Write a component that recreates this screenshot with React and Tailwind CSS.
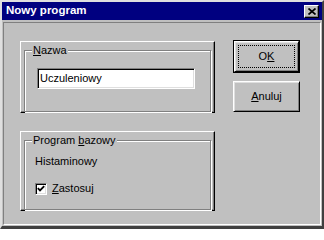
import React from "react";

const font = { fontFamily: '"Liberation Sans", Arial, sans-serif' };

function GroupFrame({ label, height, children }) {
    return (
        <div
            className={`w-[195px] ${height} border border-t-white border-l-white border-b-black border-r-black shadow-[inset_-1px_-1px_0_#808080] pt-[8px] pl-[3px]`}
        >
            <div className="relative w-[187px] h-full border border-[#808080] shadow-[inset_1px_1px_0_#fff,1px_1px_0_#fff]">
                <span className="absolute left-[7px] -top-[7px] px-[1px] leading-[13px] bg-[#c0c0c0] text-[11px] text-black">
                    {label}
                </span>
                {children}
            </div>
        </div>
    );
}

function Button({ children, isDefault, className = "" }) {
    const bevel = (
        <div className="flex-1 flex border border-t-white border-l-white border-b-black border-r-black shadow-[inset_1px_1px_0_#dfdfdf,inset_-1px_-1px_0_#808080]">
            {isDefault ? (
                <div className="flex-1 m-[3px] border border-dotted border-black flex items-center justify-center text-[11px] text-black">
                    {children}
                </div>
            ) : (
                <div className="flex-1 flex items-center justify-center text-[11px] text-black">
                    {children}
                </div>
            )}
        </div>
    );

    return (
        <div className={`w-[67px] flex ${isDefault ? "border border-black" : ""} ${className}`}>
            {bevel}
        </div>
    );
}

export default function App() {
    return (
        <div
            style={font}
            className="w-[324px] h-[229px] bg-[#c0c0c0] border-t-2 border-l-2 border-r-2 border-b-[3px] border-t-[#dfdfdf] border-l-[#dfdfdf] border-r-[#404040] border-b-[#404040] flex flex-col"
        >
            {/* TITLE BAR */}

            <div className="h-[18px] bg-[#000080] flex items-center justify-between pl-[4px] pr-[3px]">
                <span className="text-white font-bold text-[11.5px] leading-none">
                    Nowy program
                </span>
                <div className="w-[15px] h-[13px] bg-[#c0c0c0] flex items-center justify-center border border-t-white border-l-white border-b-black border-r-black shadow-[inset_-1px_-1px_0_#808080]">
                    <svg width="8" height="7" viewBox="0 0 8 7">
                        <path d="M0.5 0.5 L7.5 6.5 M7.5 0.5 L0.5 6.5" stroke="#000" strokeWidth="1.7" />
                    </svg>
                </div>
            </div>

            {/* CLIENT */}

            <div className="mt-[2px] mx-[1px] h-[203px] border border-t-[#808080] border-l-[#808080] border-b-white border-r-white flex gap-[18px] pl-[16px] pt-[18px]">

                <div className="flex flex-col gap-[18px]">

                    <GroupFrame
                        height="h-[72px]"
                        label={<><span className="underline">N</span>azwa</>}
                    >
                        <div className="ml-[12px] mt-[17px] w-[158px] h-[21px] bg-white border border-t-[#808080] border-l-[#808080] border-b-white border-r-white shadow-[inset_1px_1px_0_#000,inset_-1px_-1px_0_#dfdfdf] flex items-center pl-[2px] text-[11px] text-black">
                            Uczuleniowy
                        </div>
                    </GroupFrame>

                    <GroupFrame
                        height="h-[80px]"
                        label={<>Program <span className="underline">b</span>azowy</>}
                    >
                        <div className="ml-[10px] mt-[14px] text-[11px] leading-[13px] text-black">
                            Histaminowy
                        </div>
                        <div className="ml-[10px] mt-[14px] flex items-center gap-[5px] text-[11px] leading-[13px] text-black">
                            <div className="w-[12px] h-[12px] bg-white border border-t-[#808080] border-l-[#808080] border-b-white border-r-white shadow-[inset_1px_1px_0_#000,inset_-1px_-1px_0_#dfdfdf] flex items-center justify-center">
                                <svg width="8" height="7" viewBox="0 0 8 7">
                                    <path d="M0.8 3.2 L3 5.4 L7.2 1.2" stroke="#000" strokeWidth="1.8" fill="none" />
                                </svg>
                            </div>
                            <span>
                                <span className="underline">Z</span>astosuj
                            </span>
                        </div>
                    </GroupFrame>

                </div>

                {/* BUTTONS */}

                <div className="flex flex-col -mt-[1px]">
                    <Button isDefault className="h-[33px]">
                        O<span className="underline">K</span>
                    </Button>
                    <Button className="h-[31px] mt-[8px]">
                        <span className="underline">A</span>nuluj
                    </Button>
                </div>

            </div>
        </div>
    );
}
